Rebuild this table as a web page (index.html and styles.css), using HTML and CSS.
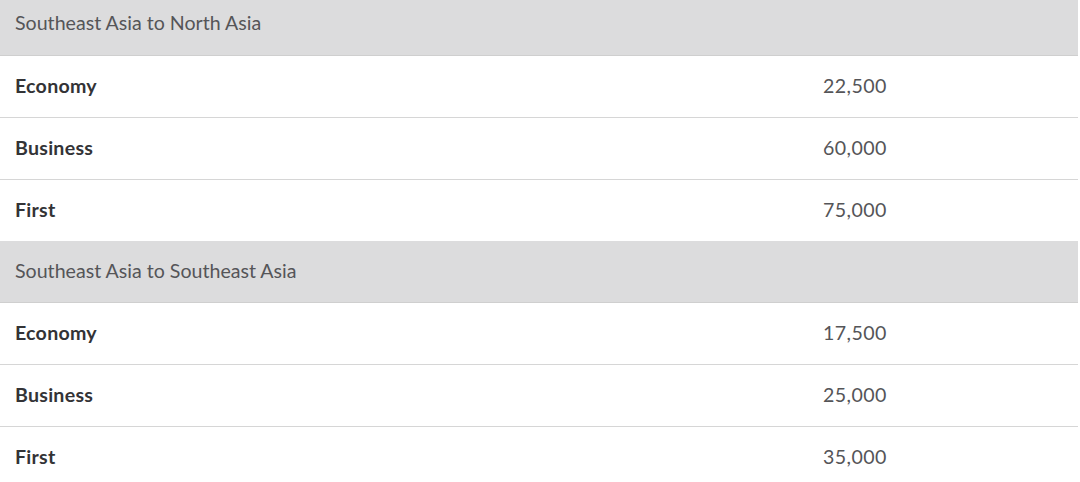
FILE: index.html
```html
<!DOCTYPE html>
<html lang="en">
<head>
<meta charset="utf-8">
<title>Award chart</title>
<link rel="stylesheet" href="styles.css">
</head>
<body>
<div class="chart">
  <div class="group">
    <div class="group-head group-head--first">Southeast Asia to North Asia</div>
    <div class="row"><span class="label">Economy</span><span class="value">22,500</span></div>
    <div class="row"><span class="label">Business</span><span class="value">60,000</span></div>
    <div class="row row--last"><span class="label">First</span><span class="value">75,000</span></div>
  </div>
  <div class="group">
    <div class="group-head">Southeast Asia to Southeast Asia</div>
    <div class="row"><span class="label">Economy</span><span class="value">17,500</span></div>
    <div class="row"><span class="label">Business</span><span class="value">25,000</span></div>
    <div class="row row--last"><span class="label">First</span><span class="value">35,000</span></div>
  </div>
</div>
</body>
</html>
```

FILE: styles.css
```css
html, body {
  margin: 0;
  padding: 0;
  background: #ffffff;
}
body {
  font-family: "Lato", "Liberation Sans", sans-serif;
  overflow: hidden;
}
.chart {
  width: 1078px;
  display: flex;
  flex-direction: column;
}
.group {
  display: flex;
  flex-direction: column;
}
.group-head {
  height: 59px;
  padding-bottom: 2px;
  display: flex;
  align-items: center;
  padding-left: 15px;
  background: #dcdcdd;
  border-bottom: 1px solid #cfcfcf;
  color: #555558;
  font-size: 19.6px;
}
.group-head--first {
  align-items: flex-start;
  padding-top: 11px;
  padding-bottom: 0;
  height: 44px;
}
.row {
  height: 59px;
  padding-bottom: 2px;
  display: grid;
  grid-template-columns: 808px 1fr;
  align-items: center;
  border-bottom: 1px solid #d6d6d6;
  background: #fff;
}
.row--last {
  border-bottom: none;
}
.label {
  padding-left: 15px;
  font-weight: 700;
  font-size: 19.6px;
  letter-spacing: 0.25px;
  color: #333336;
}
.value {
  padding-left: 15px;
  font-size: 19.6px;
  letter-spacing: 0.4px;
  color: #555558;
}
```
